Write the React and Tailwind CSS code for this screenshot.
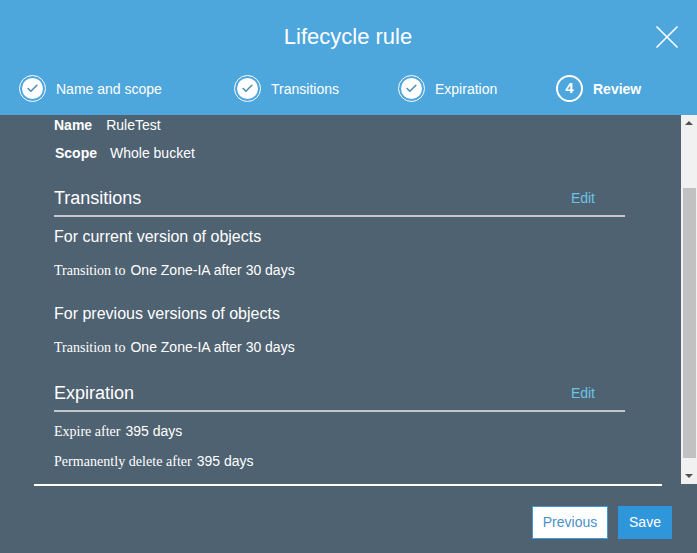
import { X, Check } from "lucide-react";

const sans = { fontFamily: '"Liberation Sans", Arial, sans-serif' };

const DoneStep = ({ label, className }) => (
    <div className={`flex items-center ${className}`}>
        <div className="w-[27px] h-[27px] rounded-full border border-white flex items-center justify-center">
            <div className="w-[21px] h-[21px] rounded-full bg-white flex items-center justify-center">
                <Check className="w-[13px] h-[13px] text-[#4f8fb8]" strokeWidth={3} />
            </div>
        </div>
        <span className="ml-[10px] pt-[2px] text-[14px] text-white">{label}</span>
    </div>
);

const SectionHeader = ({ title }) => (
    <div className="flex items-center justify-between h-[31px] border-b-2 border-[#c4c8cc] w-[571px] pb-[5px]">
        <span className="text-[18px] leading-[20px] text-white">{title}</span>
        <a className="text-[14px] leading-[16px] text-[#6cc4e4] mr-[30px]">Edit</a>
    </div>
);

const Line = ({ label, value, className, labelClass = "" }) => (
    <div className={`flex items-baseline text-[14px] leading-[18px] text-white ${className}`}>
        <span className={`font-['Liberation_Serif',serif] text-[14px] ${labelClass}`}>{label}</span>
        <span className="ml-[5px]">{value}</span>
    </div>
);

export default function App() {
    return (
        <div className="w-[697px] h-[553px] bg-[#4f6272] flex flex-col overflow-hidden" style={sans}>
            <header className="h-[115px] bg-[#4da6dc] shrink-0 flex flex-col">
                <div className="relative h-[73px] flex items-center justify-center">
                    <h1 className="text-[22px] text-white -ml-[1px]">Lifecycle rule</h1>
                    <X className="absolute right-[10px] top-[17px] w-[40px] h-[40px] text-white" strokeWidth={1} />
                </div>
                <div className="flex items-center pl-[19px] h-[30px]">
                    <DoneStep label="Name and scope" className="w-[215px]" />
                    <DoneStep label="Transitions" className="w-[164px]" />
                    <DoneStep label="Expiration" className="w-[158px]" />
                    <div className="flex items-center">
                        <div className="w-[27px] h-[27px] rounded-full border-2 border-white flex items-center justify-center text-[15px] font-bold text-white">4</div>
                        <span className="ml-[10px] pt-[2px] text-[14px] font-bold text-white">Review</span>
                    </div>
                </div>
            </header>

            <div className="flex h-[369px] shrink-0">
                <main className="flex-1 pl-[54px] pt-[1px]">
                    <div className="flex items-baseline text-[14px] leading-[18px] text-white">
                        <b>Name</b><span className="ml-[14px]">RuleTest</span>
                    </div>
                    <div className="flex items-baseline text-[14px] leading-[18px] text-white mt-[10px] pl-[1px]">
                        <b>Scope</b><span className="ml-[13px]">Whole bucket</span>
                    </div>
                    <div className="mt-[24px]"><SectionHeader title="Transitions" /></div>
                    <p className="text-[16px] leading-[20px] text-white mt-[10px]">For current version of objects</p>
                    <Line className="mt-[14px]" label="Transition to" value="One Zone-IA after 30 days" />
                    <p className="text-[16px] leading-[20px] text-white mt-[24px]">For previous versions of objects</p>
                    <Line className="mt-[14px]" label="Transition to" value="One Zone-IA after 30 days" />
                    <div className="mt-[24px]"><SectionHeader title="Expiration" /></div>
                    <Line className="mt-[10px]" label="Expire after" value="395 days" />
                    <Line className="mt-[11px]" label="Permanently delete after" value="395 days" labelClass="tracking-[0.04px]" />
                </main>
                <div className="w-[16px] bg-[#f1f1f1] flex flex-col items-center">
                    <div className="h-[16px] flex items-center justify-center">
                        <div className="w-0 h-0 border-x-[4px] border-x-transparent border-b-[4px] border-b-[#505050]" />
                    </div>
                    <div className="mt-[57px] w-[13px] h-[270px] bg-[#c1c1c1]" />
                    <div className="mt-auto h-[16px] flex items-center justify-center">
                        <div className="w-0 h-0 border-x-[4px] border-x-transparent border-t-[4px] border-t-[#505050]" />
                    </div>
                </div>
            </div>

            <div className="mx-[34px] w-[628px] h-[2px] bg-white shrink-0" />

            <footer className="flex justify-end gap-[10px] pr-[25px] pt-[20px]">
                <button className="w-[76px] h-[33px] bg-white border border-[#3f9ad6] text-[14px] text-[#4a90c8]">Previous</button>
                <button className="w-[54px] h-[33px] bg-[#2f96dc] text-[14px] text-white">Save</button>
            </footer>
        </div>
    );
}
